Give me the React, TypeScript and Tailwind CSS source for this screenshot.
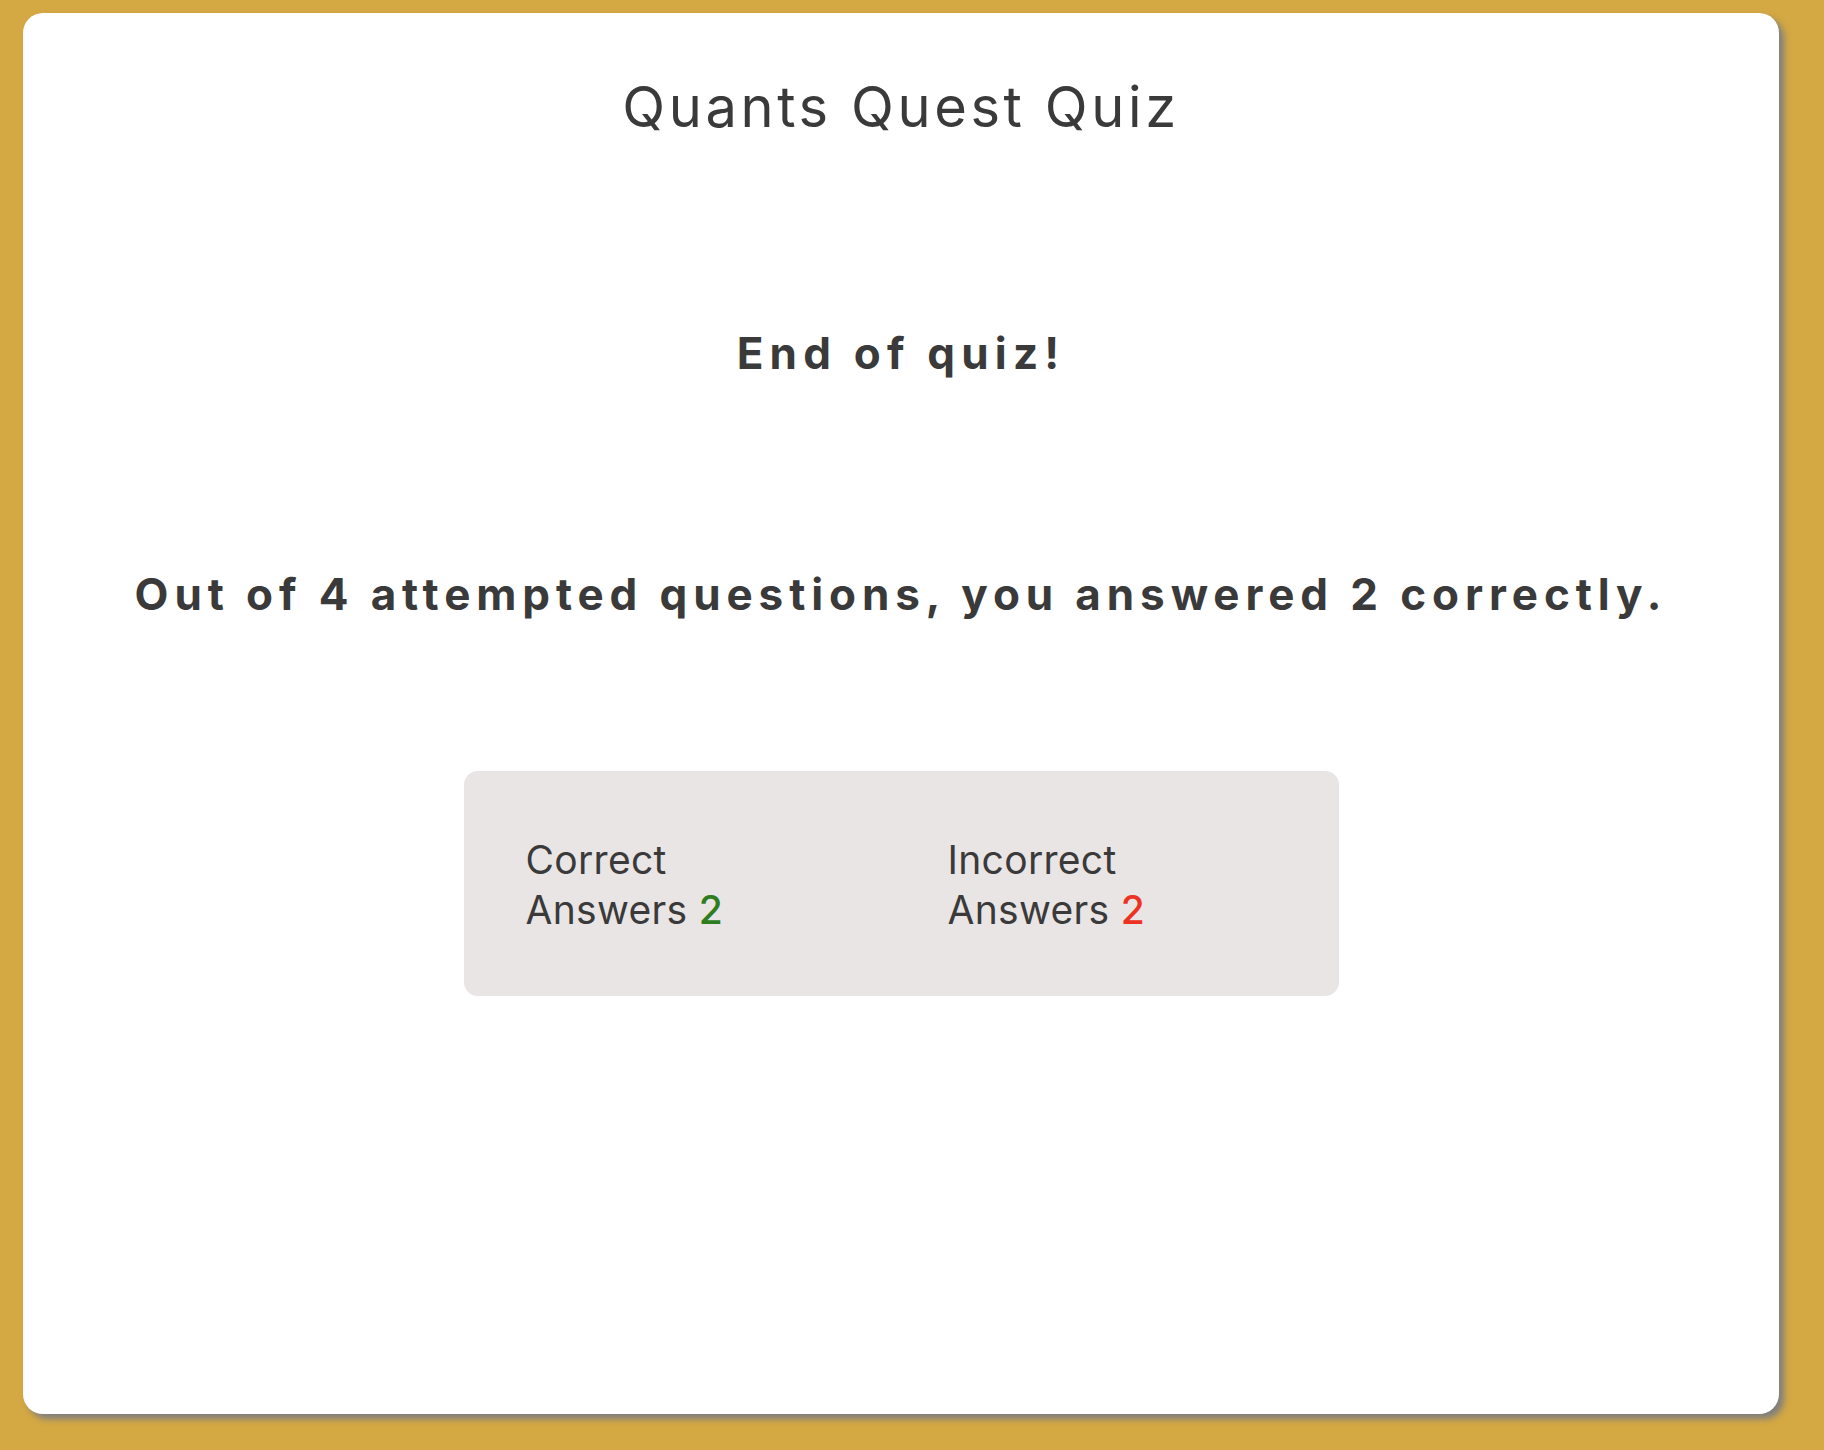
import React from 'react';

export default function App() {
  const correct = 2;
  const incorrect = 2;
  const attempted = 4;

  return (
    <div className="min-h-screen bg-[#d4a843] pt-[13px] pl-[23px] pb-[36px]">
      <div
        className="w-[1756px] h-[1401px] bg-white rounded-[20px] shadow-[5px_5px_6px_#7f7f7f] flex flex-col items-center text-[#3a3a3a]"
        style={{ fontFamily: 'Inter, "Open Sans", sans-serif' }}
      >
        <h1 className="mt-[60px] text-[56px] leading-[68px] font-normal tracking-[3.6px]">
          Quants Quest Quiz
        </h1>

        <h2 className="mt-[186px] text-[44px] leading-[53px] font-bold tracking-[6.2px]">
          End of quiz!
        </h2>

        <p className="mt-[188px] text-[44px] leading-[53px] font-bold tracking-[5.9px]">
          Out of {attempted} attempted questions, you answered {correct} correctly.
        </p>

        {/* Score summary */}
        <div className="mt-[150px] w-[875px] h-[225px] bg-[#e9e5e5] rounded-[14px] pl-[62px] pr-[64px] py-[64px] flex gap-[97px] text-[39px] leading-[50px] tracking-[0.3px]">
          <div className="w-[325px]">
            <div>Correct</div>
            <div>
              Answers <span className="text-[#2e7d1f] font-medium">{correct}</span>
            </div>
          </div>
          <div className="w-[325px]">
            <div>Incorrect</div>
            <div>
              Answers <span className="text-[#ec3323] font-medium">{incorrect}</span>
            </div>
          </div>
        </div>
      </div>
    </div>
  );
}
